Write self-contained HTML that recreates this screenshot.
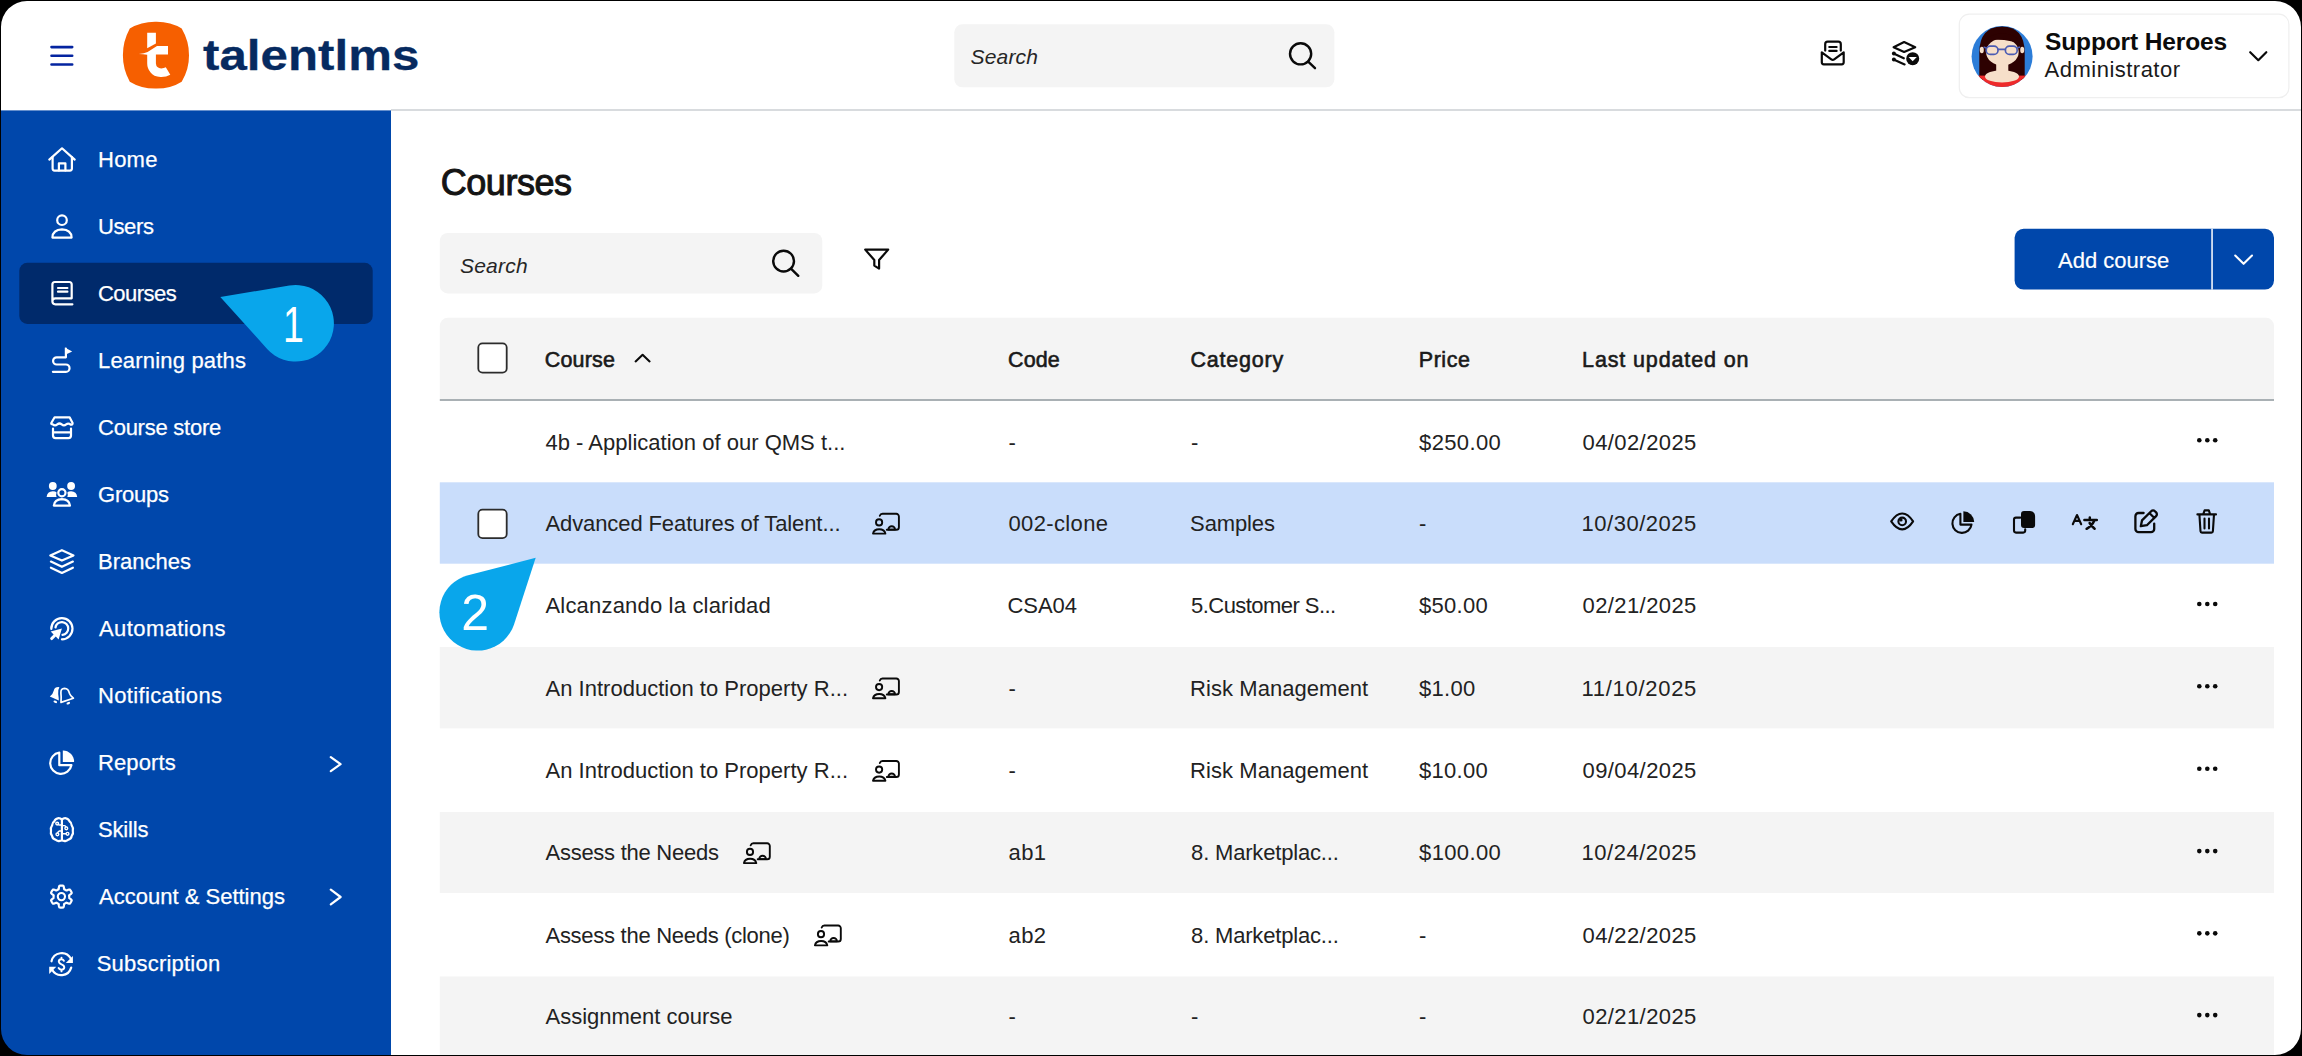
<!DOCTYPE html><html><head><meta charset="utf-8"><title>Courses</title><style>
html,body{margin:0;padding:0;width:2302px;height:1056px;overflow:hidden;background:#fff}
.t{position:absolute;white-space:nowrap;font-family:"Liberation Sans",sans-serif;line-height:1;margin:0;padding:0}
svg{position:absolute;left:0;top:0}
</style></head><body><svg width="2302" height="1056" viewBox="0 0 2302 1056"><rect x="0" y="0" width="2302" height="110" fill="#fff"/>
<rect x="391" y="109.2" width="1911" height="1.6" fill="#cfd3d6"/>
<rect x="0" y="110.4" width="391" height="946" fill="#0047ab"/>
<rect x="19.3" y="262.8" width="353.4" height="61.1" rx="8" fill="#002a6b"/>
<g stroke="#0424a0" stroke-width="2.6" stroke-linecap="round"><path d="M51.5 47.1H72.2M51.5 55.8H72.2M51.5 64.5H72.2"/></g>
<path fill="#f65f00" d="M155.9 21.8 Q170.5 21.6 181.7 28.6 Q189.2 41.5 189 55.2 Q189.2 69 181.7 81.7 Q170.5 88.8 155.9 88.6 Q141.3 88.8 129.8 81.7 Q122.8 69 122.9 55.2 Q122.8 41.5 129.8 28.6 Q141.3 21.6 155.9 21.8 Z"/>
<path fill="#fff" d="M147.2 32.8 H155.9 V43.4 L147.2 48.3 Z"/>
<path fill="#fff" d="M138.9 54 Q144.5 53.6 147.6 52.1 L157 46.1 H168 V54.4 H155.9 V63.5 Q156.3 68.2 161.2 68.4 Q164 68.4 165.8 67.3 L170.3 74.8 Q166 77.3 160.5 77.1 Q153.5 76.8 150.6 72.6 Q147.2 68.5 147.2 63.5 V54.8 Q143 54.3 138.9 54 Z"/>
<rect x="954.3" y="24.3" width="380.1" height="63" rx="8" fill="#f4f4f4"/>
<g fill="none" stroke="#0a0a0a" stroke-width="2.4" stroke-linecap="round"><circle cx="1300.6" cy="53.8" r="10.6"/><path d="M1308.2 61.6 L1315 68.2"/></g>
<g fill="none" stroke="#0a0a0a" stroke-width="2.2" stroke-linecap="round" stroke-linejoin="round"><path d="M1825.2 50.6 V44.2 A2.5 2.5 0 0 1 1827.7 41.7 H1838.3 A2.5 2.5 0 0 1 1840.8 44.2 V50.6"/><path d="M1829.3 47 H1836.6 M1829.3 50.9 H1836.6"/><path d="M1821.8 52.4 V62.3 A2 2 0 0 0 1823.8 64.3 H1841.7 A2 2 0 0 0 1843.7 62.3 V52.4 L1834.2 59.3 A2.5 2.5 0 0 1 1831.3 59.3 Z"/></g>
<g fill="none" stroke="#0a0a0a" stroke-width="2.2" stroke-linecap="round" stroke-linejoin="round"><path d="M1893.6 47.2 L1904.1 42.1 L1915.2 47.2 L1904.1 52 Z"/><path d="M1893.6 53.6 L1903.8 58.3 M1893.6 59.6 L1904.6 64.4"/></g><circle cx="1893.9" cy="53.6" r="2" fill="#0a0a0a"/><circle cx="1893.9" cy="59.6" r="2" fill="#0a0a0a"/><circle cx="1912.7" cy="58.7" r="6.5" fill="#0a0a0a"/><path d="M1908.6 56.9 H1916.8 L1912.7 61.2 Z" fill="#fff"/>
<rect x="1959.3" y="14.2" width="329.6" height="83.5" rx="10" fill="#fff" stroke="#efefef" stroke-width="1.2"/>
<defs><clipPath id="av"><circle cx="2002.1" cy="56.5" r="30.5"/></clipPath></defs><g clip-path="url(#av)"><rect x="1970" y="25" width="64" height="64" fill="#2c7dd8"/><path fill="#2d0101" d="M1979.3 80 V53 Q1979.3 26.8 2002 26.6 Q2024.7 26.8 2024.7 53 V80 Z"/><rect x="1970" y="75.6" width="64" height="14" fill="#ee2a2a"/><ellipse cx="2002" cy="76.4" rx="17" ry="6.2" fill="#f6dfc9"/><rect x="1996.2" y="60" width="12.1" height="17" fill="#f6dfc9"/><ellipse cx="1981.8" cy="50" rx="2" ry="3.2" fill="#f6dfc9"/><ellipse cx="2022.2" cy="50" rx="2" ry="3.2" fill="#f6dfc9"/><ellipse cx="2002.4" cy="52" rx="16.3" ry="13.6" fill="#f6dfc9"/><path fill="#2d0101" d="M1985.3 46 Q1987 40.5 1993.5 39.8 Q2003 39.4 2011 41.2 Q2017.5 42.5 2019.6 46.5 Q2019.5 34 2002.3 33.5 Q1985.5 34 1985.3 46 Z"/><g fill="none" stroke="#4b5cb3" stroke-width="1.7"><rect x="1986.2" y="46.2" width="11.8" height="8.2" rx="4"/><rect x="2005.4" y="46.2" width="11.8" height="8.2" rx="4"/><path d="M1998 49.4 H2005.4 M1986.2 48 L1983.6 47 M2017.2 48 L2020 47"/></g></g>
<path d="M2250.2 52.2 L2258.3 60.2 L2266.3 52.2" fill="none" stroke="#0a0a0a" stroke-width="2.2" stroke-linecap="round" stroke-linejoin="round"/>
<g fill="none" stroke="#fff" stroke-width="2.2" stroke-linecap="round" stroke-linejoin="round">
<path d="M49.3 159.6 L62 148.3 L74.7 159.6"/><path d="M52.6 157 V168.6 A2 2 0 0 0 54.6 170.6 H69.9 A2 2 0 0 0 71.9 168.6 V157"/><path d="M58.9 170.4 V163.3 H65.4 V170.4"/>
<circle cx="62" cy="220.2" r="4.8"/><path d="M52.4 237.6 Q52.8 229.6 62 229.4 Q71.2 229.6 71.6 237.6 Z"/>
<path d="M52.4 301.5 V284.5 A2.5 2.5 0 0 1 54.9 282 H69.2 A2.5 2.5 0 0 1 71.7 284.5 V298.3 H55.4 A3 3 0 0 0 55.4 304.3 H72.4"/><path d="M58 288 H67.4 M58 291.7 H67.4"/>
<path d="M65.9 348.5 V357.3 H56.7 A3.6 3.6 0 0 0 56.7 364.5 H65.9 A3.65 3.65 0 0 1 65.9 371.8 H52.9"/>
</g>
<path fill="#fff" d="M64.8 347.6 L72.2 351.4 L65.9 354.6 Z"/>
<g fill="none" stroke="#fff" stroke-width="2.2" stroke-linecap="round" stroke-linejoin="round">
<path d="M54.6 417.3 H69.6 L72.6 423 Q72.8 424.8 70.6 424.6 Q68.4 422.6 66.2 424.4 Q63.9 426.2 61.7 424.4 Q59.5 422.6 57.3 424.4 Q55 426.2 52.8 424.4 Q50.8 424.4 51.3 423 Z"/>
<path d="M53 428.6 V435.6 A2.5 2.5 0 0 0 55.5 438.1 H68.5 A2.5 2.5 0 0 0 71 435.6 V428.6 M53 432.3 H71"/>
<circle cx="61.9" cy="492.7" r="3.6"/><path d="M53.8 505.6 Q54.6 499.4 61.9 499.2 Q69.2 499.4 70 505.6 Z"/>
<path d="M50.3 555.4 L61.9 550.2 L73.5 555.4 L61.9 560.6 Z M50.9 561.6 L61.9 566.8 L72.9 561.6 M50.9 567.7 L61.9 572.9 L72.9 567.7"/>
<path d="M51.3 629 A10.6 10.6 0 1 1 61.9 639.3"/><path d="M55.5 627.5 A6.4 6.4 0 1 1 62.5 634.8"/>
</g>
<path fill="#fff" d="M61.9 628.6 L50.7 631.5 L53.6 634.4 L50.6 637.4 A1.5 1.5 0 0 0 52.8 639.6 L55.8 636.6 L58.6 639.4 Z"/>
<g fill="#fff"><circle cx="52.8" cy="486" r="3.9"/><circle cx="71.1" cy="486" r="3.9"/><path d="M46.6 497 Q47.2 491.4 52.8 491.2 Q55.6 491.2 56.6 492.4 Q55.6 494.6 56.6 497 Z"/><path d="M77.2 497 Q76.6 491.4 71.1 491.2 Q68.3 491.2 67.3 492.4 Q68.3 494.6 67.3 497 Z"/></g>
<path fill="#fff" d="M49.8 696.6 Q53.2 693.6 53.8 690.4 Q55 686.6 59.4 687.2 Q57.6 690 58.2 694 Q58.8 698 58.8 700.6 Z"/>
<ellipse cx="55.3" cy="701.8" rx="1.9" ry="1.1" fill="#fff" transform="rotate(25 55.3 701.8)"/>
<path fill="none" stroke="#fff" stroke-width="1.7" stroke-linejoin="round" d="M61 702.4 Q61.4 697 60.9 693 Q60.6 688.4 64.5 688.3 Q68.5 688.4 69.4 693.2 Q70.4 696 73.4 698.2 Z"/>
<ellipse cx="68.3" cy="703.2" rx="1.9" ry="1.1" fill="#fff" transform="rotate(-25 68.3 703.2)"/>
<g fill="none" stroke="#fff" stroke-width="2.2" stroke-linecap="round" stroke-linejoin="round"><path d="M59.3 752.6 A10.7 10.7 0 1 0 71.4 765.2 H59.3 Z"/></g>
<path fill="#fff" d="M62.8 750.4 A11.4 11.4 0 0 1 74.1 761.9 H62.8 Z"/>
<g fill="none" stroke="#fff" stroke-width="2.2" stroke-linecap="round" stroke-linejoin="round" stroke-width="2.1">
<path d="M61.9 819.6 Q63.6 817.9 66 818.3 Q68.6 818.7 69.4 821.2 Q71.7 822.6 71.7 825.4 Q73.5 827.8 72.8 830.8 Q73.6 833.8 71.7 836 Q71.2 838.9 68.5 839.6 Q66.6 841.6 64.1 840.9 Q62.9 840.9 61.9 840.1 Q60.9 840.9 59.7 840.9 Q57.2 841.6 55.3 839.6 Q52.6 838.9 52.1 836 Q50.2 833.8 51 830.8 Q50.3 827.8 52.1 825.4 Q52.1 822.6 54.4 821.2 Q55.2 818.7 57.8 818.3 Q60.2 817.9 61.9 819.6 Z M61.9 819.6 V840"/>
</g>
<g fill="none" stroke="#fff" stroke-width="1.4" stroke-linecap="round"><path d="M61.9 825 H59.6 Q58.6 825 57.9 824.2"/><circle cx="57.2" cy="823.6" r="1.4"/><path d="M61.9 831 H59.4 Q58 831.4 57.6 833"/><circle cx="57.4" cy="834.3" r="1.4"/><path d="M62 825.6 H64.4 Q65.6 825.8 66 827"/><circle cx="66.3" cy="828.3" r="1.4"/><path d="M62 833.8 H66"/><circle cx="67.5" cy="833.8" r="1.4"/></g>
<path fill="none" stroke="#fff" stroke-width="2.2" stroke-linecap="round" stroke-linejoin="round" stroke-width="2.1" d="M69.20 896.60 L69.20 896.74 L69.20 896.87 L69.19 897.01 L69.18 897.14 L69.17 897.28 L69.16 897.42 L69.14 897.55 L69.12 897.69 L69.15 897.83 L69.26 897.99 L69.45 898.17 L69.71 898.37 L70.01 898.59 L70.33 898.83 L70.67 899.08 L70.98 899.35 L71.26 899.61 L71.48 899.87 L71.63 900.12 L71.69 900.35 L71.67 900.54 L71.60 900.72 L71.53 900.90 L71.45 901.07 L71.37 901.25 L71.29 901.42 L71.20 901.59 L71.11 901.76 L71.02 901.93 L70.93 902.10 L70.83 902.27 L70.73 902.43 L70.63 902.59 L70.52 902.75 L70.41 902.91 L70.30 903.07 L70.18 903.22 L70.07 903.37 L69.95 903.52 L69.79 903.64 L69.56 903.70 L69.28 903.69 L68.94 903.63 L68.57 903.52 L68.18 903.38 L67.80 903.22 L67.42 903.06 L67.08 902.91 L66.78 902.79 L66.53 902.72 L66.34 902.70 L66.20 902.75 L66.09 902.83 L65.98 902.91 L65.87 902.99 L65.76 903.07 L65.65 903.14 L65.53 903.21 L65.42 903.29 L65.30 903.35 L65.18 903.42 L65.06 903.49 L64.94 903.55 L64.82 903.61 L64.70 903.67 L64.57 903.73 L64.45 903.78 L64.32 903.83 L64.21 903.93 L64.13 904.10 L64.07 904.36 L64.02 904.68 L63.98 905.05 L63.94 905.45 L63.88 905.87 L63.81 906.27 L63.72 906.64 L63.60 906.97 L63.46 907.22 L63.30 907.39 L63.12 907.46 L62.93 907.49 L62.74 907.52 L62.55 907.54 L62.36 907.56 L62.17 907.57 L61.98 907.58 L61.78 907.59 L61.59 907.60 L61.40 907.60 L61.21 907.60 L61.02 907.59 L60.82 907.58 L60.63 907.57 L60.44 907.56 L60.25 907.54 L60.06 907.52 L59.87 907.49 L59.68 907.46 L59.50 907.39 L59.34 907.22 L59.20 906.97 L59.08 906.64 L58.99 906.27 L58.92 905.87 L58.86 905.45 L58.82 905.05 L58.78 904.68 L58.73 904.36 L58.67 904.10 L58.59 903.93 L58.48 903.83 L58.35 903.78 L58.23 903.73 L58.10 903.67 L57.98 903.61 L57.86 903.55 L57.74 903.49 L57.62 903.42 L57.50 903.35 L57.38 903.29 L57.27 903.21 L57.15 903.14 L57.04 903.07 L56.93 902.99 L56.82 902.91 L56.71 902.83 L56.60 902.75 L56.46 902.70 L56.27 902.72 L56.02 902.79 L55.72 902.91 L55.38 903.06 L55.00 903.22 L54.62 903.38 L54.23 903.52 L53.86 903.63 L53.52 903.69 L53.24 903.70 L53.01 903.64 L52.85 903.52 L52.73 903.37 L52.62 903.22 L52.50 903.07 L52.39 902.91 L52.28 902.75 L52.17 902.59 L52.07 902.43 L51.97 902.27 L51.87 902.10 L51.78 901.93 L51.69 901.76 L51.60 901.59 L51.51 901.42 L51.43 901.25 L51.35 901.07 L51.27 900.90 L51.20 900.72 L51.13 900.54 L51.11 900.35 L51.17 900.12 L51.32 899.87 L51.54 899.61 L51.82 899.35 L52.13 899.08 L52.47 898.83 L52.79 898.59 L53.09 898.37 L53.35 898.17 L53.54 897.99 L53.65 897.83 L53.68 897.69 L53.66 897.55 L53.64 897.42 L53.63 897.28 L53.62 897.14 L53.61 897.01 L53.60 896.87 L53.60 896.74 L53.60 896.60 L53.60 896.46 L53.60 896.33 L53.61 896.19 L53.62 896.06 L53.63 895.92 L53.64 895.78 L53.66 895.65 L53.68 895.51 L53.65 895.37 L53.54 895.21 L53.35 895.03 L53.09 894.83 L52.79 894.61 L52.47 894.37 L52.13 894.12 L51.82 893.85 L51.54 893.59 L51.32 893.33 L51.17 893.08 L51.11 892.85 L51.13 892.66 L51.20 892.48 L51.27 892.30 L51.35 892.13 L51.43 891.95 L51.51 891.78 L51.60 891.61 L51.69 891.44 L51.78 891.27 L51.87 891.10 L51.97 890.93 L52.07 890.77 L52.17 890.61 L52.28 890.45 L52.39 890.29 L52.50 890.13 L52.62 889.98 L52.73 889.83 L52.85 889.68 L53.01 889.56 L53.24 889.50 L53.52 889.51 L53.86 889.57 L54.23 889.68 L54.62 889.82 L55.00 889.98 L55.38 890.14 L55.72 890.29 L56.02 890.41 L56.27 890.48 L56.46 890.50 L56.60 890.45 L56.71 890.37 L56.82 890.29 L56.93 890.21 L57.04 890.13 L57.15 890.06 L57.27 889.99 L57.38 889.91 L57.50 889.85 L57.62 889.78 L57.74 889.71 L57.86 889.65 L57.98 889.59 L58.10 889.53 L58.23 889.47 L58.35 889.42 L58.48 889.37 L58.59 889.27 L58.67 889.10 L58.73 888.84 L58.78 888.52 L58.82 888.15 L58.86 887.75 L58.92 887.33 L58.99 886.93 L59.08 886.56 L59.20 886.23 L59.34 885.98 L59.50 885.81 L59.68 885.74 L59.87 885.71 L60.06 885.68 L60.25 885.66 L60.44 885.64 L60.63 885.63 L60.82 885.62 L61.02 885.61 L61.21 885.60 L61.40 885.60 L61.59 885.60 L61.78 885.61 L61.98 885.62 L62.17 885.63 L62.36 885.64 L62.55 885.66 L62.74 885.68 L62.93 885.71 L63.12 885.74 L63.30 885.81 L63.46 885.98 L63.60 886.23 L63.72 886.56 L63.81 886.93 L63.88 887.33 L63.94 887.75 L63.98 888.15 L64.02 888.52 L64.07 888.84 L64.13 889.10 L64.21 889.27 L64.32 889.37 L64.45 889.42 L64.57 889.47 L64.70 889.53 L64.82 889.59 L64.94 889.65 L65.06 889.71 L65.18 889.78 L65.30 889.85 L65.42 889.91 L65.53 889.99 L65.65 890.06 L65.76 890.13 L65.87 890.21 L65.98 890.29 L66.09 890.37 L66.20 890.45 L66.34 890.50 L66.53 890.48 L66.78 890.41 L67.08 890.29 L67.42 890.14 L67.80 889.98 L68.18 889.82 L68.57 889.68 L68.94 889.57 L69.28 889.51 L69.56 889.50 L69.79 889.56 L69.95 889.68 L70.07 889.83 L70.18 889.98 L70.30 890.13 L70.41 890.29 L70.52 890.45 L70.63 890.61 L70.73 890.77 L70.83 890.93 L70.93 891.10 L71.02 891.27 L71.11 891.44 L71.20 891.61 L71.29 891.78 L71.37 891.95 L71.45 892.13 L71.53 892.30 L71.60 892.48 L71.67 892.66 L71.69 892.85 L71.63 893.08 L71.48 893.33 L71.26 893.59 L70.98 893.85 L70.67 894.12 L70.33 894.37 L70.01 894.61 L69.71 894.83 L69.45 895.03 L69.26 895.21 L69.15 895.37 L69.12 895.51 L69.14 895.65 L69.16 895.78 L69.17 895.92 L69.18 896.06 L69.19 896.19 L69.20 896.33 L69.20 896.46 L69.20 896.60 Z"/>
<circle cx="61.4" cy="896.6" r="3.6" fill="none" stroke="#fff" stroke-width="2.1"/>
<g fill="none" stroke="#fff" stroke-width="2.2" stroke-linecap="round" stroke-linejoin="round" stroke-width="2.2"><path d="M51.5 961.3 A10.4 10.4 0 0 1 70.8 958.6"/><path d="M71.2 967.6 A10.4 10.4 0 0 1 52 969.6"/></g>
<path fill="#fff" d="M72.9 955.9 V963 H65.8 Z M49.2 966.8 H56.3 L49.2 973.9 Z"/>
<path fill="none" stroke="#fff" stroke-width="1.9" stroke-linecap="round" d="M63.9 960.8 Q63 959.2 61.2 959.3 Q58.6 959.6 58.8 961.8 Q59.2 963.5 61.5 964.3 Q64.3 965.3 64.3 967.4 Q64.2 969.6 61.4 969.7 Q59.4 969.6 58.6 968 M61.5 957.6 V959.2 M61.5 969.8 V971.4"/>
<path d="M330.8 757.2 L340.6 764.2 L330.8 771.2 M330.8 889.6 L340.6 897 L330.8 904.4" fill="none" stroke="#fff" stroke-width="2.2" stroke-linecap="round" stroke-linejoin="round"/>
<rect x="439.8" y="233" width="382.5" height="60.4" rx="8" fill="#f4f4f4"/>
<g fill="none" stroke="#0a0a0a" stroke-width="2.4" stroke-linecap="round"><circle cx="783.6" cy="261.1" r="10.4"/><path d="M791.2 268.8 L798.3 275.8"/></g>
<path d="M865.2 249.6 H888.2 L879.1 260 V268.6 L874.3 265.6 V260 Z" fill="none" stroke="#0a0a0a" stroke-width="2.2" stroke-linejoin="round"/>
<rect x="2014.6" y="228.8" width="259.4" height="60.8" rx="9" fill="#0047ab"/>
<rect x="2211.3" y="228.8" width="1.5" height="60.8" fill="#fff"/>
<path d="M2235.2 255.6 L2243.6 263.8 L2252 255.6" fill="none" stroke="#fff" stroke-width="2.1" stroke-linecap="round" stroke-linejoin="round"/>
<path fill="#f4f4f4" d="M439.8 399 V325.8 A8 8 0 0 1 447.8 317.8 H2266 A8 8 0 0 1 2274 325.8 V399 Z"/>
<rect x="439.8" y="399" width="1834.2" height="2" fill="#a9b0b4"/>
<rect x="439.8" y="482.3" width="1834.2" height="81.40" fill="#c9ddfb"/>
<rect x="439.8" y="647" width="1834.2" height="81.40" fill="#f4f4f4"/>
<rect x="439.8" y="812" width="1834.2" height="81.00" fill="#f4f4f4"/>
<rect x="439.8" y="976.5" width="1834.2" height="79.50" fill="#f4f4f4"/>
<rect x="478.3" y="343.3" width="28.4" height="29.4" rx="4.2" fill="#fff" stroke="#2c2c2c" stroke-width="1.8"/>
<rect x="478.3" y="509.7" width="28.4" height="28.4" rx="4.2" fill="#fff" stroke="#2c2c2c" stroke-width="1.8"/>
<path d="M635.6 361.4 L642.6 354.8 L649.6 361.4" fill="none" stroke="#0a0a0a" stroke-width="2.1" stroke-linecap="round" stroke-linejoin="round"/>
<g transform="translate(0.00,0.00)" fill="none" stroke="#0a0a0a" stroke-width="1.9" stroke-linecap="round" stroke-linejoin="round"><path d="M879.8 515.8 Q880.5 513.8 882.5 513.8 H896.3 A2.6 2.6 0 0 1 898.9 516.4 V527.2 A2.6 2.6 0 0 1 896.3 529.8 H886.8"/><circle cx="879.1" cy="522.4" r="3.1"/><path d="M873 533.6 A6.3 5.2 0 0 1 885.4 533.6 Z"/><path d="M888.4 529.6 A3.3 3.3 0 0 1 895 529.6 Z"/></g>
<g transform="translate(0.00,164.70)" fill="none" stroke="#0a0a0a" stroke-width="1.9" stroke-linecap="round" stroke-linejoin="round"><path d="M879.8 515.8 Q880.5 513.8 882.5 513.8 H896.3 A2.6 2.6 0 0 1 898.9 516.4 V527.2 A2.6 2.6 0 0 1 896.3 529.8 H886.8"/><circle cx="879.1" cy="522.4" r="3.1"/><path d="M873 533.6 A6.3 5.2 0 0 1 885.4 533.6 Z"/><path d="M888.4 529.6 A3.3 3.3 0 0 1 895 529.6 Z"/></g>
<g transform="translate(0.00,247.20)" fill="none" stroke="#0a0a0a" stroke-width="1.9" stroke-linecap="round" stroke-linejoin="round"><path d="M879.8 515.8 Q880.5 513.8 882.5 513.8 H896.3 A2.6 2.6 0 0 1 898.9 516.4 V527.2 A2.6 2.6 0 0 1 896.3 529.8 H886.8"/><circle cx="879.1" cy="522.4" r="3.1"/><path d="M873 533.6 A6.3 5.2 0 0 1 885.4 533.6 Z"/><path d="M888.4 529.6 A3.3 3.3 0 0 1 895 529.6 Z"/></g>
<g transform="translate(-129.10,329.50)" fill="none" stroke="#0a0a0a" stroke-width="1.9" stroke-linecap="round" stroke-linejoin="round"><path d="M879.8 515.8 Q880.5 513.8 882.5 513.8 H896.3 A2.6 2.6 0 0 1 898.9 516.4 V527.2 A2.6 2.6 0 0 1 896.3 529.8 H886.8"/><circle cx="879.1" cy="522.4" r="3.1"/><path d="M873 533.6 A6.3 5.2 0 0 1 885.4 533.6 Z"/><path d="M888.4 529.6 A3.3 3.3 0 0 1 895 529.6 Z"/></g>
<g transform="translate(-58.10,411.75)" fill="none" stroke="#0a0a0a" stroke-width="1.9" stroke-linecap="round" stroke-linejoin="round"><path d="M879.8 515.8 Q880.5 513.8 882.5 513.8 H896.3 A2.6 2.6 0 0 1 898.9 516.4 V527.2 A2.6 2.6 0 0 1 896.3 529.8 H886.8"/><circle cx="879.1" cy="522.4" r="3.1"/><path d="M873 533.6 A6.3 5.2 0 0 1 885.4 533.6 Z"/><path d="M888.4 529.6 A3.3 3.3 0 0 1 895 529.6 Z"/></g>
<circle cx="2199.3" cy="440.25" r="2.3" fill="#0a0a0a"/><circle cx="2207.3" cy="440.25" r="2.3" fill="#0a0a0a"/><circle cx="2215.2" cy="440.25" r="2.3" fill="#0a0a0a"/>
<circle cx="2199.3" cy="603.95" r="2.3" fill="#0a0a0a"/><circle cx="2207.3" cy="603.95" r="2.3" fill="#0a0a0a"/><circle cx="2215.2" cy="603.95" r="2.3" fill="#0a0a0a"/>
<circle cx="2199.3" cy="686.30" r="2.3" fill="#0a0a0a"/><circle cx="2207.3" cy="686.30" r="2.3" fill="#0a0a0a"/><circle cx="2215.2" cy="686.30" r="2.3" fill="#0a0a0a"/>
<circle cx="2199.3" cy="768.80" r="2.3" fill="#0a0a0a"/><circle cx="2207.3" cy="768.80" r="2.3" fill="#0a0a0a"/><circle cx="2215.2" cy="768.80" r="2.3" fill="#0a0a0a"/>
<circle cx="2199.3" cy="851.10" r="2.3" fill="#0a0a0a"/><circle cx="2207.3" cy="851.10" r="2.3" fill="#0a0a0a"/><circle cx="2215.2" cy="851.10" r="2.3" fill="#0a0a0a"/>
<circle cx="2199.3" cy="933.35" r="2.3" fill="#0a0a0a"/><circle cx="2207.3" cy="933.35" r="2.3" fill="#0a0a0a"/><circle cx="2215.2" cy="933.35" r="2.3" fill="#0a0a0a"/>
<circle cx="2199.3" cy="1015.10" r="2.3" fill="#0a0a0a"/><circle cx="2207.3" cy="1015.10" r="2.3" fill="#0a0a0a"/><circle cx="2215.2" cy="1015.10" r="2.3" fill="#0a0a0a"/>
<g fill="none" stroke="#0a0a0a" stroke-width="2.1" stroke-linecap="round" stroke-linejoin="round">
<path d="M1891.2 521.4 Q1896.6 513.4 1902.2 513.5 Q1907.8 513.4 1913.1 521.4 Q1907.8 529.4 1902.2 529.4 Q1896.6 529.4 1891.2 521.4 Z"/><circle cx="1902.2" cy="521.4" r="3.8"/>
<path d="M1960.4 513.8 A9.6 9.6 0 1 0 1971.5 524.6 H1960.4 Z"/>
<path d="M2020.4 517.6 H2016 A2 2 0 0 0 2014 519.6 V530.6 A2 2 0 0 0 2016 532.6 H2023.2 A2 2 0 0 0 2025.2 530.6 V529.2"/>
<path stroke-width="2.3" d="M2135.4 516.2 A3.2 3.2 0 0 1 2138.6 513 H2143.6 M2154.2 523.6 V529 A3.2 3.2 0 0 1 2151 532.2 H2138.6 A3.2 3.2 0 0 1 2135.4 529 V516.2"/>
<path stroke-width="2.3" d="M2140.8 526.2 L2142 520.4 L2151.2 511.2 A2.6 2.6 0 0 1 2154.9 511.2 L2156.1 512.4 A2.6 2.6 0 0 1 2156.1 516.1 L2146.9 525.2 Z M2149.6 513.2 L2154.2 517.8"/>
<path d="M2197.4 514.4 H2216 M2203.2 514.4 L2204.6 510.4 H2208.8 L2210.2 514.4 M2199.4 514.4 L2200.5 531.2 A1.5 1.5 0 0 0 2202 532.6 H2211.4 A1.5 1.5 0 0 0 2212.9 531.2 L2214 514.4 M2204.5 518.6 V528.4 M2209 518.6 V528.4"/>
</g>
<path fill="#0a0a0a" d="M1963.4 511.2 A11 11 0 0 1 1974.2 522 H1963.4 Z"/>
<path fill="#0a0a0a" d="M2024 511 H2030 Q2035.1 511.4 2035.1 516.4 V525.1 A3 3 0 0 1 2032.1 528.1 H2024 A3 3 0 0 1 2021 525.1 V514 A3 3 0 0 1 2024 511 Z"/><circle cx="1900.9" cy="519.9" r="1.7" fill="#0a0a0a"/>
<g fill="none" stroke="#0a0a0a" stroke-width="2.1" stroke-linecap="round" stroke-linejoin="round" stroke-width="2.8"><path d="M2072.8 524.2 L2077 515 L2081.2 524.2 M2074.4 520.9 H2079.6"/><path stroke-width="2.5" d="M2084.4 519.9 H2096.8 M2089.8 517.6 V519.9 M2094.4 520.4 Q2092 525.8 2086.6 528.8 M2089.6 523 Q2092 526.8 2094.6 528.8"/></g></svg>
<span class="t" style="left:202.50px;top:35.44px;font-size:42px;font-weight:700;font-style:normal;color:#062a60;letter-spacing:0.070px;-webkit-text-stroke:0.3px #062a60;transform:scaleX(1.17);transform-origin:0 0;">talentlms</span>
<span class="t" style="left:970.60px;top:46.12px;font-size:21px;font-weight:400;font-style:italic;color:#262626;letter-spacing:0.168px;">Search</span>
<span class="t" style="left:2045.00px;top:29.56px;font-size:24.5px;font-weight:700;font-style:normal;color:#0b0b0b;letter-spacing:-0.119px;">Support Heroes</span>
<span class="t" style="left:2044.60px;top:59.47px;font-size:22px;font-weight:400;font-style:normal;color:#1a1a1a;letter-spacing:0.486px;">Administrator</span>
<span class="t" style="left:98.00px;top:148.87px;font-size:22px;font-weight:400;font-style:normal;color:#ffffff;letter-spacing:0.250px;-webkit-text-stroke:0.25px #fff;">Home</span>
<span class="t" style="left:98.00px;top:215.87px;font-size:22px;font-weight:400;font-style:normal;color:#ffffff;letter-spacing:-0.387px;-webkit-text-stroke:0.25px #fff;">Users</span>
<span class="t" style="left:98.00px;top:282.87px;font-size:22px;font-weight:400;font-style:normal;color:#ffffff;letter-spacing:-0.520px;-webkit-text-stroke:0.25px #fff;">Courses</span>
<span class="t" style="left:98.00px;top:349.87px;font-size:22px;font-weight:400;font-style:normal;color:#ffffff;letter-spacing:0.188px;-webkit-text-stroke:0.25px #fff;">Learning paths</span>
<span class="t" style="left:98.00px;top:416.87px;font-size:22px;font-weight:400;font-style:normal;color:#ffffff;letter-spacing:-0.246px;-webkit-text-stroke:0.25px #fff;">Course store</span>
<span class="t" style="left:98.00px;top:483.87px;font-size:22px;font-weight:400;font-style:normal;color:#ffffff;letter-spacing:-0.229px;-webkit-text-stroke:0.25px #fff;">Groups</span>
<span class="t" style="left:98.00px;top:550.87px;font-size:22px;font-weight:400;font-style:normal;color:#ffffff;letter-spacing:0.008px;-webkit-text-stroke:0.25px #fff;">Branches</span>
<span class="t" style="left:99.00px;top:617.87px;font-size:22px;font-weight:400;font-style:normal;color:#ffffff;letter-spacing:0.411px;-webkit-text-stroke:0.25px #fff;">Automations</span>
<span class="t" style="left:98.00px;top:684.87px;font-size:22px;font-weight:400;font-style:normal;color:#ffffff;letter-spacing:0.348px;-webkit-text-stroke:0.25px #fff;">Notifications</span>
<span class="t" style="left:98.00px;top:751.87px;font-size:22px;font-weight:400;font-style:normal;color:#ffffff;letter-spacing:0.111px;-webkit-text-stroke:0.25px #fff;">Reports</span>
<span class="t" style="left:98.00px;top:818.87px;font-size:22px;font-weight:400;font-style:normal;color:#ffffff;letter-spacing:-0.187px;-webkit-text-stroke:0.25px #fff;">Skills</span>
<span class="t" style="left:99.00px;top:885.87px;font-size:22px;font-weight:400;font-style:normal;color:#ffffff;letter-spacing:0.007px;-webkit-text-stroke:0.25px #fff;">Account &amp; Settings</span>
<span class="t" style="left:96.70px;top:952.87px;font-size:22px;font-weight:400;font-style:normal;color:#ffffff;letter-spacing:0.216px;-webkit-text-stroke:0.25px #fff;">Subscription</span>
<span class="t" style="left:440.70px;top:165.02px;font-size:36px;font-weight:400;font-style:normal;color:#141414;letter-spacing:-0.442px;-webkit-text-stroke:1px #141414;">Courses</span>
<span class="t" style="left:459.90px;top:254.72px;font-size:21px;font-weight:400;font-style:italic;color:#262626;letter-spacing:0.228px;">Search</span>
<span class="t" style="left:2058.00px;top:249.57px;font-size:22px;font-weight:400;font-style:normal;color:#ffffff;letter-spacing:-0.006px;-webkit-text-stroke:0.2px #fff;">Add course</span>
<span class="t" style="left:544.80px;top:349.50px;font-size:21.5px;font-weight:400;font-style:normal;color:#1a1a1a;letter-spacing:0.150px;-webkit-text-stroke:0.6px #1a1a1a;">Course</span>
<span class="t" style="left:1008.00px;top:349.50px;font-size:21.5px;font-weight:400;font-style:normal;color:#1a1a1a;letter-spacing:0.120px;-webkit-text-stroke:0.6px #1a1a1a;">Code</span>
<span class="t" style="left:1190.40px;top:349.50px;font-size:21.5px;font-weight:400;font-style:normal;color:#1a1a1a;letter-spacing:0.816px;-webkit-text-stroke:0.6px #1a1a1a;">Category</span>
<span class="t" style="left:1418.80px;top:349.50px;font-size:21.5px;font-weight:400;font-style:normal;color:#1a1a1a;letter-spacing:0.518px;-webkit-text-stroke:0.6px #1a1a1a;">Price</span>
<span class="t" style="left:1582.10px;top:349.50px;font-size:21.5px;font-weight:400;font-style:normal;color:#1a1a1a;letter-spacing:0.867px;-webkit-text-stroke:0.6px #1a1a1a;">Last updated on</span>
<span class="t" style="left:545.50px;top:431.52px;font-size:22px;font-weight:400;font-style:normal;color:#222222;letter-spacing:0.010px;">4b - Application of our QMS t...</span>
<span class="t" style="left:1008.50px;top:431.52px;font-size:22px;font-weight:400;font-style:normal;color:#222222;letter-spacing:0.000px;">-</span>
<span class="t" style="left:1191.10px;top:431.52px;font-size:22px;font-weight:400;font-style:normal;color:#222222;letter-spacing:0.000px;">-</span>
<span class="t" style="left:1419.10px;top:431.52px;font-size:22px;font-weight:400;font-style:normal;color:#222222;letter-spacing:0.352px;">$250.00</span>
<span class="t" style="left:1582.50px;top:431.52px;font-size:22px;font-weight:400;font-style:normal;color:#222222;letter-spacing:0.414px;">04/02/2025</span>
<span class="t" style="left:545.50px;top:512.87px;font-size:22px;font-weight:400;font-style:normal;color:#222222;letter-spacing:-0.103px;">Advanced Features of Talent...</span>
<span class="t" style="left:1008.50px;top:512.87px;font-size:22px;font-weight:400;font-style:normal;color:#222222;letter-spacing:0.364px;">002-clone</span>
<span class="t" style="left:1190.10px;top:512.87px;font-size:22px;font-weight:400;font-style:normal;color:#222222;letter-spacing:-0.132px;">Samples</span>
<span class="t" style="left:1419.10px;top:512.87px;font-size:22px;font-weight:400;font-style:normal;color:#222222;letter-spacing:0.000px;">-</span>
<span class="t" style="left:1581.50px;top:512.87px;font-size:22px;font-weight:400;font-style:normal;color:#222222;letter-spacing:0.525px;">10/30/2025</span>
<span class="t" style="left:545.50px;top:595.22px;font-size:22px;font-weight:400;font-style:normal;color:#222222;letter-spacing:0.184px;">Alcanzando la claridad</span>
<span class="t" style="left:1007.50px;top:595.22px;font-size:22px;font-weight:400;font-style:normal;color:#222222;letter-spacing:-0.043px;">CSA04</span>
<span class="t" style="left:1191.10px;top:595.22px;font-size:22px;font-weight:400;font-style:normal;color:#222222;letter-spacing:-0.551px;">5.Customer S...</span>
<span class="t" style="left:1419.10px;top:595.22px;font-size:22px;font-weight:400;font-style:normal;color:#222222;letter-spacing:0.249px;">$50.00</span>
<span class="t" style="left:1582.50px;top:595.22px;font-size:22px;font-weight:400;font-style:normal;color:#222222;letter-spacing:0.414px;">02/21/2025</span>
<span class="t" style="left:545.50px;top:677.57px;font-size:22px;font-weight:400;font-style:normal;color:#222222;letter-spacing:0.015px;">An Introduction to Property R...</span>
<span class="t" style="left:1008.50px;top:677.57px;font-size:22px;font-weight:400;font-style:normal;color:#222222;letter-spacing:0.000px;">-</span>
<span class="t" style="left:1190.10px;top:677.57px;font-size:22px;font-weight:400;font-style:normal;color:#222222;letter-spacing:0.058px;">Risk Management</span>
<span class="t" style="left:1419.10px;top:677.57px;font-size:22px;font-weight:400;font-style:normal;color:#222222;letter-spacing:0.270px;">$1.00</span>
<span class="t" style="left:1581.50px;top:677.57px;font-size:22px;font-weight:400;font-style:normal;color:#222222;letter-spacing:0.707px;">11/10/2025</span>
<span class="t" style="left:545.50px;top:760.07px;font-size:22px;font-weight:400;font-style:normal;color:#222222;letter-spacing:0.015px;">An Introduction to Property R...</span>
<span class="t" style="left:1008.50px;top:760.07px;font-size:22px;font-weight:400;font-style:normal;color:#222222;letter-spacing:0.000px;">-</span>
<span class="t" style="left:1190.10px;top:760.07px;font-size:22px;font-weight:400;font-style:normal;color:#222222;letter-spacing:0.058px;">Risk Management</span>
<span class="t" style="left:1419.10px;top:760.07px;font-size:22px;font-weight:400;font-style:normal;color:#222222;letter-spacing:0.249px;">$10.00</span>
<span class="t" style="left:1582.50px;top:760.07px;font-size:22px;font-weight:400;font-style:normal;color:#222222;letter-spacing:0.414px;">09/04/2025</span>
<span class="t" style="left:545.50px;top:842.37px;font-size:22px;font-weight:400;font-style:normal;color:#222222;letter-spacing:-0.261px;">Assess the Needs</span>
<span class="t" style="left:1008.50px;top:842.37px;font-size:22px;font-weight:400;font-style:normal;color:#222222;letter-spacing:0.415px;">ab1</span>
<span class="t" style="left:1191.10px;top:842.37px;font-size:22px;font-weight:400;font-style:normal;color:#222222;letter-spacing:-0.179px;">8. Marketplac...</span>
<span class="t" style="left:1419.10px;top:842.37px;font-size:22px;font-weight:400;font-style:normal;color:#222222;letter-spacing:0.352px;">$100.00</span>
<span class="t" style="left:1581.50px;top:842.37px;font-size:22px;font-weight:400;font-style:normal;color:#222222;letter-spacing:0.525px;">10/24/2025</span>
<span class="t" style="left:545.50px;top:924.62px;font-size:22px;font-weight:400;font-style:normal;color:#222222;letter-spacing:-0.276px;">Assess the Needs (clone)</span>
<span class="t" style="left:1008.50px;top:924.62px;font-size:22px;font-weight:400;font-style:normal;color:#222222;letter-spacing:0.415px;">ab2</span>
<span class="t" style="left:1191.10px;top:924.62px;font-size:22px;font-weight:400;font-style:normal;color:#222222;letter-spacing:-0.179px;">8. Marketplac...</span>
<span class="t" style="left:1419.10px;top:924.62px;font-size:22px;font-weight:400;font-style:normal;color:#222222;letter-spacing:0.000px;">-</span>
<span class="t" style="left:1582.50px;top:924.62px;font-size:22px;font-weight:400;font-style:normal;color:#222222;letter-spacing:0.414px;">04/22/2025</span>
<span class="t" style="left:545.50px;top:1006.37px;font-size:22px;font-weight:400;font-style:normal;color:#222222;letter-spacing:-0.003px;">Assignment course</span>
<span class="t" style="left:1008.50px;top:1006.37px;font-size:22px;font-weight:400;font-style:normal;color:#222222;letter-spacing:0.000px;">-</span>
<span class="t" style="left:1191.10px;top:1006.37px;font-size:22px;font-weight:400;font-style:normal;color:#222222;letter-spacing:0.000px;">-</span>
<span class="t" style="left:1419.10px;top:1006.37px;font-size:22px;font-weight:400;font-style:normal;color:#222222;letter-spacing:0.000px;">-</span>
<span class="t" style="left:1582.50px;top:1006.37px;font-size:22px;font-weight:400;font-style:normal;color:#222222;letter-spacing:0.414px;">02/21/2025</span>
<svg width="2302" height="1056" viewBox="0 0 2302 1056"><path fill="#09a6eb" d="M220.30 297.00 L289.32 285.52 A38.3 38.3 0 1 1 267.16 348.95 Z"/><path fill="#09a6eb" d="M535.70 557.80 L514.12 624.15 A38.3 38.3 0 1 1 468.14 575.21 Z"/><text transform="translate(283,341.5) scale(0.75,1)" x="0" y="0" font-family="Liberation Sans" font-size="50" fill="#fff">1</text><text x="461.3" y="630" font-family="Liberation Sans" font-size="50" fill="#fff">2</text><path fill="#000" fill-rule="evenodd" d="M0 0H2302V1056H0Z M27 1H2275A26 26 0 0 1 2301 27V1029A26 26 0 0 1 2275 1055H27A26 26 0 0 1 1 1029V27A26 26 0 0 1 27 1Z"/></svg></body></html>
